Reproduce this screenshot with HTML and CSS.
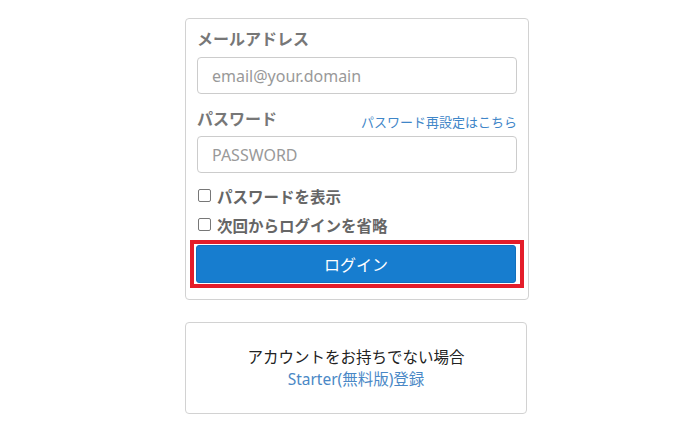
FILE: index.html
```html
<!DOCTYPE html>
<html lang="ja">
<head>
    <meta charset="UTF-8">
    <meta name="viewport" content="width=device-width, initial-scale=1.0">
    <title>ログイン</title>
    <link rel="stylesheet" href="styles.css">
</head>
<body>
    <!-- Login form -->
    <div class="login-card">
        <div class="field-label">メールアドレス</div>
        <input class="text-input" type="text" placeholder="email@your.domain">

        <div class="label-row">
            <span class="field-label">パスワード</span>
            <a class="reset-link" href="#">パスワード再設定はこちら</a>
        </div>
        <input class="text-input" type="password" placeholder="PASSWORD">

        <label class="check-row first"><span class="check-box"></span>パスワードを表示</label>
        <label class="check-row"><span class="check-box"></span>次回からログインを省略</label>

        <div class="highlight">
            <button class="login-button">ログイン</button>
        </div>
    </div>

    <!-- Sign up -->
    <div class="signup-card">
        <div class="signup-text">アカウントをお持ちでない場合</div>
        <a class="signup-link" href="#">Starter(無料版)登録</a>
    </div>
</body>
</html>
```

FILE: styles.css
```css
body {
    margin: 0;
    padding-top: 18px;
    font-family: "Liberation Sans", "Noto Sans CJK JP", sans-serif;
    background: #fff;
}

.login-card,
.signup-card {
    width: 340px;
    margin-left: 185px;
    border: 1px solid #d2d2d2;
    border-radius: 4px;
    box-sizing: content-box;
    background: #fff;
}

.login-card {
    padding: 10px 11px 11px 11px;
    width: 320px;
}

.field-label {
    display: block;
    font-size: 16px;
    line-height: 22px;
    font-weight: bold;
    color: #777;
}

.login-card > .field-label {
    margin-bottom: 6px;
}

.text-input {
    display: block;
    width: 320px;
    height: 37px;
    box-sizing: border-box;
    margin: 0;
    padding: 0 14px;
    border: 1px solid #ccc;
    border-radius: 4px;
    font-family: "Noto Sans", "Noto Sans CJK JP", sans-serif;
    font-size: 16px;
    color: #333;
}

.text-input::placeholder {
    color: #999;
}

.label-row {
    display: flex;
    justify-content: space-between;
    align-items: flex-end;
    margin: 15px 0 5px;
    height: 22px;
}

.reset-link {
    font-size: 13px;
    line-height: 16px;
    color: #3f86c8;
    text-decoration: none;
}

.check-row {
    display: flex;
    align-items: center;
    height: 29px;
    font-size: 15.5px;
    font-weight: bold;
    color: #666;
}

.check-row.first {
    margin-top: 8px;
}

.check-box {
    width: 11px;
    height: 11px;
    border: 1px solid #777;
    border-radius: 2px;
    margin: 0 6px 0 1px;
}

.highlight {
    margin: 1px -7px 0;
    padding: 1px 2px;
    border: 4px solid #e41d2a;
}

.login-button {
    display: block;
    width: 320px;
    height: 38px;
    border: 1px solid #1270bd;
    border-radius: 3px;
    background: #177dcf;
    color: #fff;
    font-family: "Liberation Sans", "Noto Sans CJK JP", sans-serif;
    font-size: 16px;
    cursor: pointer;
}

.signup-card {
    margin-top: 22px;
    padding: 23px 0;
    text-align: center;
    font-family: "Noto Sans", "Noto Sans CJK JP", sans-serif;
    font-size: 15.5px;
    line-height: 22px;
}

.signup-text {
    color: #222;
}

.signup-link {
    color: #4a88c6;
    text-decoration: none;
}
```
